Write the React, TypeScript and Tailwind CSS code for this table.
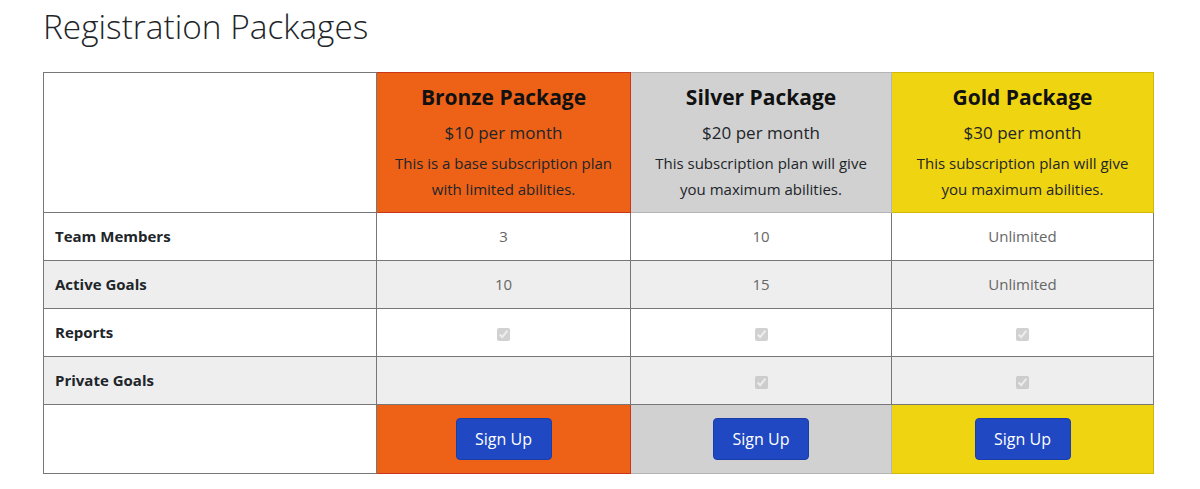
import React from "react";

const plans = [
  {
    name: "Bronze Package",
    price: "$10 per month",
    desc: "This is a base subscription plan with limited abilities.",
    bg: "bg-[#ee6218]",
    border: "border-[#c9341a]",
  },
  {
    name: "Silver Package",
    price: "$20 per month",
    desc: "This subscription plan will give you maximum abilities.",
    bg: "bg-[#d1d1d1]",
    border: "border-[#b5b5b5]",
  },
  {
    name: "Gold Package",
    price: "$30 per month",
    desc: "This subscription plan will give you maximum abilities.",
    bg: "bg-[#efd412]",
    border: "border-[#d2b80a]",
  },
];

type Val = string | boolean | null;
const rows: { label: string; vals: Val[] }[] = [
  { label: "Team Members", vals: ["3", "10", "Unlimited"] },
  { label: "Active Goals", vals: ["10", "15", "Unlimited"] },
  { label: "Reports", vals: [true, true, true] },
  { label: "Private Goals", vals: [null, true, true] },
];

function Check() {
  return (
    <input
      type="checkbox"
      checked
      disabled
      readOnly
      className="m-0 inline-block h-[13px] w-[13px] align-middle"
    />
  );
}

export default function App() {
  return (
    <div
      className="min-h-[489px] bg-white text-[#212529]"
      style={{ fontFamily: '"Open Sans", "Liberation Sans", sans-serif' }}
    >
      <h1 className="pl-[43px] pt-[3px] text-[33.4px] font-light leading-[46px] text-[#212529]">
        Registration Packages
      </h1>
      <table className="ml-[43px] mt-[23px] w-[1110px] table-fixed border-collapse border border-[#777]">
        <colgroup>
          <col className="w-[333px]" />
          <col className="w-[254px]" />
          <col className="w-[261px]" />
          <col className="w-[262px]" />
        </colgroup>
        <thead>
          <tr className="h-[140px]">
            <th className="border border-[#777] bg-white"></th>
            {plans.map((p) => (
              <th
                key={p.name}
                className={`border ${p.border} ${p.bg} px-3 pb-[6px] pt-[9px] align-top font-normal`}
              >
                <div className="text-[21px] font-bold leading-[30px] text-[#111]">{p.name}</div>
                <div className="mt-[8px] text-[17px] leading-[26px] text-[#212529]">{p.price}</div>
                <div className="mt-[4px] text-[15px] leading-[26px] text-[#212529]">{p.desc}</div>
              </th>
            ))}
          </tr>
        </thead>
        <tbody>
          {rows.map((r, i) => (
            <tr key={r.label} className={`h-[48px] ${i % 2 === 1 ? "bg-[#eeeeee]" : "bg-white"}`}>
              <td className="border border-[#777] px-[11px] text-[15px] font-bold text-[#212529]">
                {r.label}
              </td>
              {r.vals.map((v, j) => (
                <td
                  key={j}
                  className="border border-[#777] text-center text-[15px] text-[#666]"
                >
                  {v === true ? <Check /> : v === null ? null : v}
                </td>
              ))}
            </tr>
          ))}
          <tr className="h-[69px]">
            <td className="border border-[#777] bg-white"></td>
            {plans.map((p) => (
              <td key={p.name} className={`border ${p.border} ${p.bg} text-center`}>
                <button className="h-[42px] w-[96px] rounded-[4px] border border-[#1a3ea8] bg-[#1f48c2] text-[16px] text-white">
                  Sign Up
                </button>
              </td>
            ))}
          </tr>
        </tbody>
      </table>
    </div>
  );
}
